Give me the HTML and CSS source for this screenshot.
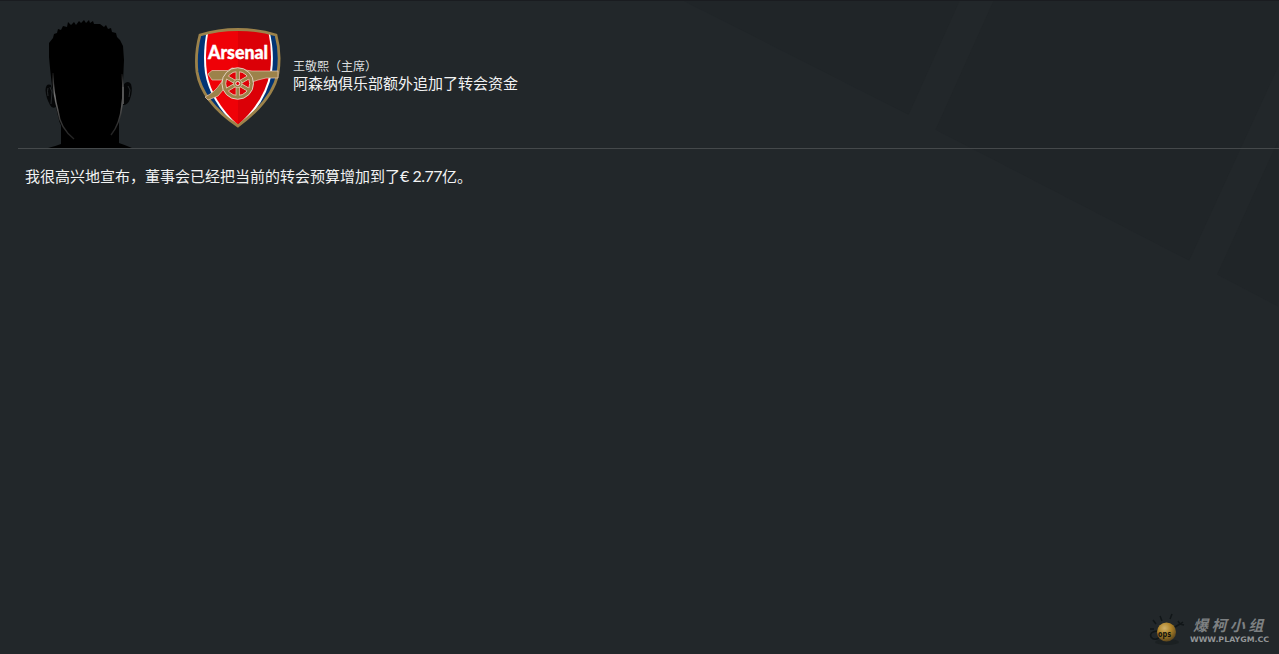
FILE: index.html
```html
<!DOCTYPE html>
<html lang="zh-CN">
<head>
    <meta charset="UTF-8">
    <meta name="viewport" content="width=device-width, initial-scale=1.0">
    <title>阿森纳俱乐部额外追加了转会资金</title>
    <link rel="stylesheet" href="styles.css">
</head>
<body>
    <svg class="backdrop" viewBox="0 0 1279 654" aria-hidden="true">
        <path d="M684 0H960L909 114Z"/>
        <path d="M994 0L936 129L1190 260L1279 66V0Z"/>
        <path d="M1279 140L1218 274L1279 306Z"/>
    </svg>

    <main class="message">
        <header class="message-header">
            <!-- Silueta del presidente -->
            <svg class="portrait" viewBox="0 0 130 148">
                <defs>
                    <linearGradient id="rimLeft" x1="0" y1="0" x2="0" y2="1">
                        <stop offset="0" stop-color="#111"/>
                        <stop offset=".35" stop-color="#777"/>
                        <stop offset=".7" stop-color="#3a3a3a"/>
                        <stop offset="1" stop-color="#222"/>
                    </linearGradient>
                </defs>
                <path d="M28 148Q36 146 41 144V122H99V143Q105 145 112 148Z"/>
                <path d="M31 85Q26 83 25.5 90Q26 98 30 105Q32 109 36 107ZM104 84Q108 80 111 84Q113 91 110 99Q108 105 103 105Z" fill="#050607"/>
                <path d="M32 86Q30 69 29 57V43L33 38L34 34L37 33L38 29L41 30L43 26L47 27L48 22L51 25L54 22L56 25L59 21L61 23L64 20L66 23L69 20L70 23L73 21L74 24L80 24L84 27L86 25L88 29L91 28L92 32L96 33L97 37L100 40L103 46L104 60L103 82L102 101Q101 119 96 128Q87 141 75 144Q62 147 49 136Q40 128 38 116Q34 101 32 86Z"/>
                <!-- luz del contorno -->
                <path d="M33 73Q33 93 38 111Q40 128 54 139" fill="none" stroke="url(#rimLeft)" stroke-width="1.5"/>
                <path d="M102 74Q104 93 102 105Q100 124 91 135" fill="none" stroke="url(#rimLeft)" stroke-width="1.5"/>
                <path d="M103 87V104" fill="none" stroke="#555" stroke-width="1.8"/>
                <path d="M28 88Q27 91 28 96M30 87L32 92L31 104M108 86L110 90L109 97" fill="none" stroke="#303436" stroke-width=".8"/>
            </svg>

            <!-- Escudo del club -->
            <svg class="crest" viewBox="0 0 105 115">
                <defs>
                    <clipPath id="shield">
                        <path d="M15 15Q33 9.5 53 9.5Q73 9.5 91 15Q96 33 93 53Q88 80 53 106Q17 82 12 52Q10 33 15 15Z"/>
                    </clipPath>
                </defs>
                <g clip-path="url(#shield)">
                    <path d="M0 0H105V115H0Z" fill="#023474"/>
                    <path d="M23 5Q17 31 20 53Q25 82 53 108Q82 83 87 52Q90 30 83 5Z" fill="#fff"/>
                    <path d="M24.5 5Q19 31 22 53Q27 81 53 105V5Z" fill="#ef0107"/>
                    <path d="M53 5H82Q88 30 85 52Q80 81 53 105Z" fill="#db0007"/>
                </g>
                <path d="M15 15Q33 9.5 53 9.5Q73 9.5 91 15Q96 33 93 53Q88 80 53 106Q17 82 12 52Q10 33 15 15Z" fill="none" stroke="#9c824a" stroke-width="2.8"/>
                <path d="M23 54L27 50.5H43L47 48L60 50L67 51H93V58H81L73 60L61 64L43 64L33 76L23 80L20 77Q30 72 35 64L38 60H27Z" fill="#9c824a" stroke="#e8c9b8" stroke-width=".7"/>
                <circle cx="52.7" cy="63.5" r="15.8" fill="#9c824a" stroke="#f4e6dd" stroke-width=".8"/>
                <circle cx="52.7" cy="63.5" r="12" fill="#e00007" stroke="#eadfc5" stroke-width=".8"/>
                <path d="M52.7 52V75M42.7 57.75L62.7 69.25M42.7 69.25L62.7 57.75" stroke="#eadfc5" stroke-width="4"/>
                <path d="M52.7 51V76M41.9 57.25L63.5 69.75M41.9 69.75L63.5 57.25" stroke="#9c824a" stroke-width="2.8"/>
                <circle cx="52.7" cy="63.5" r="4.2" fill="#9c824a" stroke="#eadfc5" stroke-width=".6"/>
                <circle cx="52.7" cy="63.5" r="2" fill="#df0007" stroke="#fff" stroke-width=".8"/>
                <text class="crest-name" x="23" y="38.5" textLength="60" lengthAdjust="spacingAndGlyphs">Arsenal</text>
            </svg>

            <div class="heading">
                <p class="sender">王敬熙（主席）</p>
                <h1 class="subject">阿森纳俱乐部额外追加了转会资金</h1>
            </div>
        </header>

        <p class="message-text">我很高兴地宣布，董事会已经把当前的转会预算增加到了<span class="amount">€ 2.77</span>亿。</p>
    </main>

    <div class="watermark">
        <svg class="bomb" viewBox="0 0 40 36">
            <defs>
                <radialGradient id="ball" cx=".4" cy=".3" r=".7">
                    <stop offset="0" stop-color="#cfb06a"/>
                    <stop offset=".5" stop-color="#af8328"/>
                    <stop offset="1" stop-color="#5f481d"/>
                </radialGradient>
            </defs>
            <ellipse cx="18" cy="29" rx="12" ry="3" fill="#1b2022"/>
            <path d="M4 7L7 11M11 3L13 8M23 1L21 6M1 16H5M26 14L31 11M29 8L31 11L35 12M31 11L34 9M8 18Q0 19 2 24Q5 28 10 25" fill="none" stroke="#111618" stroke-width="1.5"/>
            <circle cx="17.5" cy="19" r="9.5" fill="url(#ball)"/>
            <text class="bomb-label" x="9" y="24" textLength="13" lengthAdjust="spacingAndGlyphs">ops</text>
        </svg>
        <div class="watermark-text">
            <span class="group-name">爆 柯 小 组</span>
            <svg class="site" viewBox="0 0 82 13">
                <text x="1" y="8" textLength="79" lengthAdjust="spacingAndGlyphs">WWW.PLAYGM.CC</text>
            </svg>
        </div>
    </div>
</body>
</html>
```
FILE: styles.css
```css
* {
    box-sizing: border-box;
}

body {
    margin: 0;
    height: 654px;
    overflow: hidden;
    background: #22272a;
    border-top: 1px solid #1a1c20;
    color: #f2f3f3;
    font-family: Lato, "Noto Sans CJK SC", sans-serif;
}

/* Formas oscuras del fondo */
.backdrop {
    position: absolute;
    top: 0;
    left: 0;
    width: 1279px;
    height: 654px;
    fill: #202528;
    border-top: 1px solid #1a1c20;
}

.message {
    position: relative;
    padding-left: 18px;
}

.message-header {
    display: flex;
    height: 148px;
    padding-left: 2px;
    border-bottom: 1px solid #45494b;
}

.portrait {
    width: 130px;
    height: 148px;
    margin-top: -1px;
}

.crest {
    width: 105px;
    height: 115px;
    margin: 19px 3px 0 35px;
}

.crest-name {
    fill: #fff;
    stroke: #fff;
    stroke-width: .4px;
    font: 900 19px Lato, sans-serif;
}

.heading {
    padding-top: 58px;
}

.sender {
    margin: 0;
    font-size: 12px;
    line-height: 16px;
    color: #dcdedf;
}

.subject {
    margin: 0;
    font-size: 15px;
    font-weight: normal;
    line-height: 16px;
}

.message-text {
    margin: 0;
    padding: 16px 7px;
    font-size: 15px;
    line-height: 22px;
}

.amount {
    font-size: 16px;
    letter-spacing: -.5px;
}

.watermark {
    position: absolute;
    right: 8px;
    bottom: 5px;
    display: flex;
    align-items: center;
}

.bomb {
    width: 40px;
    height: 36px;
}

.bomb-label {
    fill: #11130f;
    font: bold 9px "DejaVu Sans", sans-serif;
}

.watermark-text {
    display: flex;
    flex-direction: column;
    width: 82px;
}

.group-name {
    padding-left: 4px;
    font: italic bold 15px/19px "Noto Sans CJK SC", sans-serif;
    color: #7d8082;
    white-space: nowrap;
}

.site {
    width: 82px;
    height: 13px;
    fill: #929597;
    font: bold 7.5px "DejaVu Sans", sans-serif;
}
```
